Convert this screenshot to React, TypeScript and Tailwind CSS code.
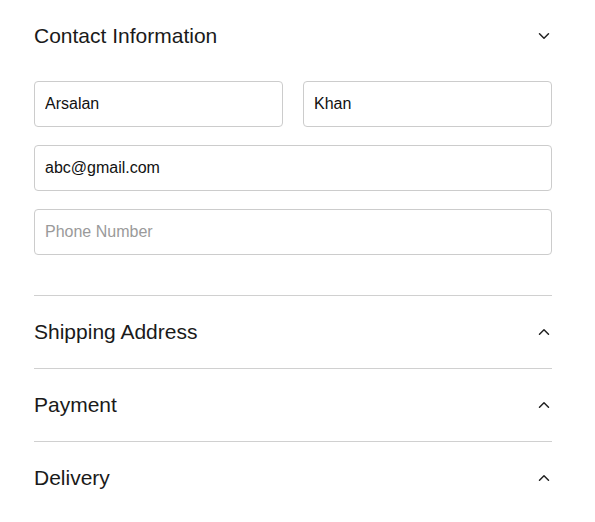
import { ChevronDown, ChevronUp } from "lucide-react";

function Field({ value, placeholder }: { value?: string; placeholder?: string }) {
  return (
    <input
      defaultValue={value}
      placeholder={placeholder}
      className="h-[46px] w-full rounded-[4px] border border-[#cccccc] bg-white px-[10px] text-[16px] text-[#111111] placeholder:text-[#9a9a9a] outline-none"
    />
  );
}

function Section({ title, open }: { title: string; open?: boolean }) {
  return (
    <div className="flex h-[72px] items-center justify-between">
      <h2 className="text-[21px] text-[#1a1a1a]">{title}</h2>
      <span className="mr-[-1px] text-[#222222]">
        {open ? <ChevronDown size={18} strokeWidth={2} /> : <ChevronUp size={18} strokeWidth={2} />}
      </span>
    </div>
  );
}

export default function App() {
  return (
    <div className="min-h-screen bg-white px-[34px] pr-[43px] font-['Liberation_Sans',Arial,sans-serif]">
      <div className="border-b border-[#d0d0d0] pb-[40px]">
        <Section title="Contact Information" open />
        <div className="mt-[9px] flex flex-col gap-[18px]">
          <div className="grid grid-cols-2 gap-[20px]">
            <Field value="Arsalan" />
            <Field value="Khan" />
          </div>
          <Field value="abc@gmail.com" />
          <Field placeholder="Phone Number" />
        </div>
      </div>
      <div className="border-b border-[#d0d0d0]">
        <Section title="Shipping Address" />
      </div>
      <div className="border-b border-[#d0d0d0]">
        <Section title="Payment" />
      </div>
      <Section title="Delivery" />
    </div>
  );
}
